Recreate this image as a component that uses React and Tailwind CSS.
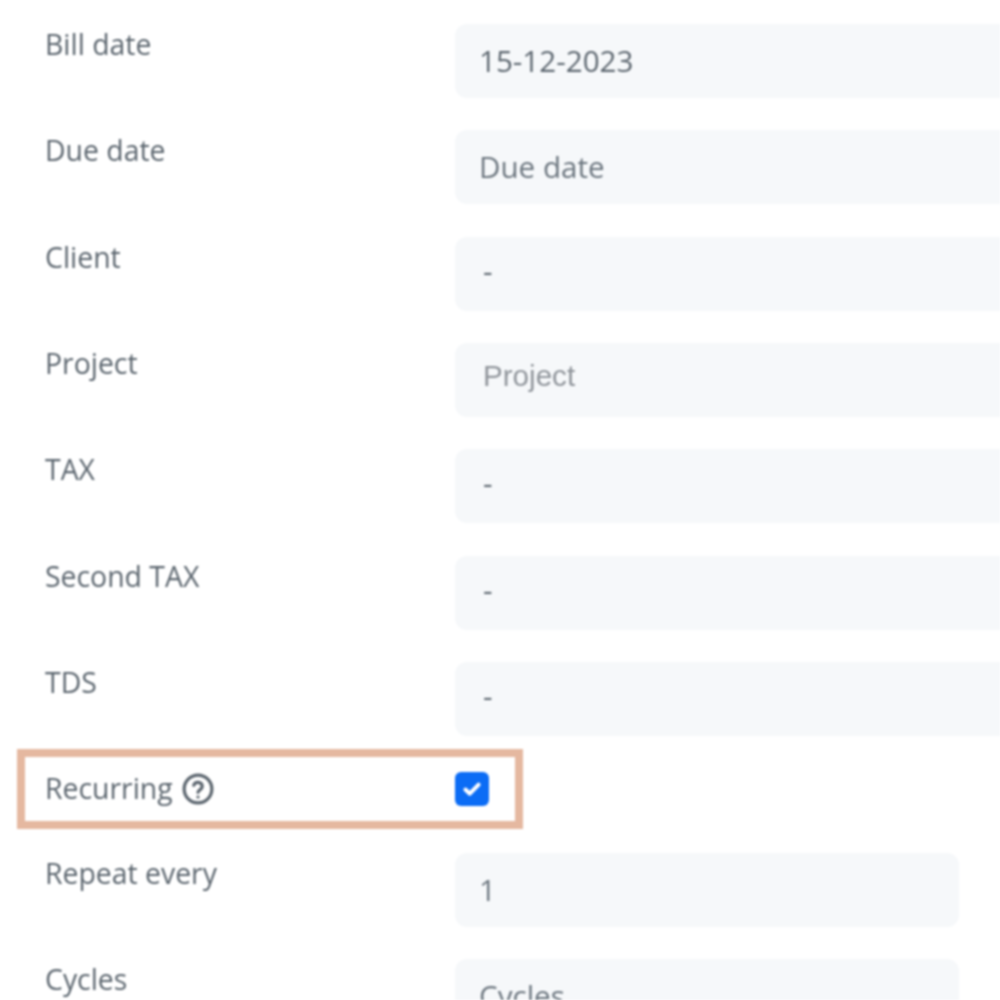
const rows = [
  { label: "Bill date", value: "15-12-2023", tone: "value" },
  { label: "Due date", value: "Due date", tone: "placeholder" },
  { label: "Client", value: "-", tone: "select" },
  { label: "Project", value: "Project", tone: "search" },
  { label: "TAX", value: "-", tone: "select" },
  { label: "Second TAX", value: "-", tone: "select" },
  { label: "TDS", value: "-", tone: "select" },
];

const tones = {
  value: "pl-6 pt-[18px] text-[#5c666f] text-[29.6px]",
  placeholder: "pl-6 pt-[18px] text-[#6c767f] text-[29.6px]",
  select: "pl-7 pt-[15px] text-[#5c666f] text-[29.6px]",
  search: "pl-7 pt-[14px] text-[#90959b] font-['Liberation_Sans',sans-serif] text-[29.6px]",
};

function Field({ label, value, tone, short }) {
  return (
    <div className="flex h-[106.33px] shrink-0">
      <div className="w-[455px] shrink-0 pl-[45px] leading-[40px]">{label}</div>
      <div
        className={`h-[74px] rounded-xl bg-[#f6f8fa] leading-[38px] ${tones[tone]} ${short ? "w-[504px]" : "w-[700px] shrink-0"}`}
      >
        {value}
      </div>
    </div>
  );
}

export default function App() {
  return (
    <div className="h-[1000px] w-[1000px] overflow-hidden bg-white pt-6 font-['Open_Sans',sans-serif] text-[28.4px] leading-10 text-[#5c666f] blur-[0.8px]">
      {rows.map((r) => (
        <Field key={r.label} {...r} />
      ))}

      {/* Highlighted recurring row */}
      <div className="relative flex h-[84.67px] shrink-0">
        <div className="flex w-[455px] shrink-0 items-start gap-[9px] pl-[45px] leading-[41px]">
          Recurring
          <svg className="mt-[5px]" width="32" height="32" viewBox="0 0 24 24" fill="none" stroke="#5c666f" strokeWidth="2.4" strokeLinecap="round" strokeLinejoin="round">
            <circle cx="12" cy="12" r="10.4" />
            <path d="M8.8 9.2a3.3 3.3 0 0 1 6.4 1c0 2.2-3.2 2.6-3.2 4.3" />
            <path d="M12 18h.01" />
          </svg>
        </div>
        <div className="mt-[4px] flex h-[34px] w-[34px] items-center justify-center rounded-md bg-[#0b6cf5]">
          <svg width="22" height="22" viewBox="0 0 20 20" fill="none" stroke="#fff" strokeWidth="3.6" strokeLinecap="round" strokeLinejoin="round">
            <path d="M4 10.5l4 3.8 8-8.3" />
          </svg>
        </div>
        <div className="absolute left-[17px] top-[-19px] h-[80px] w-[506px] border-[8px] border-[#e5b8a0]" />
      </div>

      <Field label="Repeat every" value="1" tone="placeholder" short />
      <Field label="Cycles" value="Cycles" tone="placeholder" short />
    </div>
  );
}
